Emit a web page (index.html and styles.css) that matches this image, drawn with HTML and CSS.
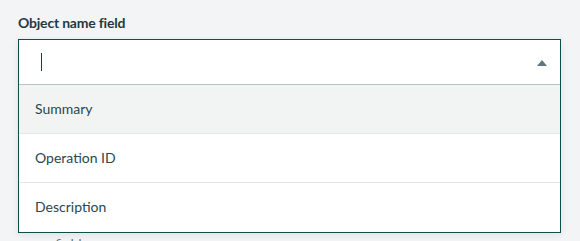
FILE: index.html
```html
<!DOCTYPE html>
<html lang="en">
<head>
  <meta charset="UTF-8">
  <title>Object name field</title>
  <link rel="stylesheet" href="styles.css">
</head>
<body>
  <div class="field">
    <label class="field-label">Object name field</label>
    <div class="select">
      <div class="select-input">
        <span class="caret"></span>
        <svg class="arrow" width="10" height="6" viewBox="0 0 10 6"><path d="M0 6 L5 0 L10 6 Z" fill="#5f7580"/></svg>
      </div>
      <ul class="options">
        <li class="option active">Summary</li>
        <li class="option">Operation ID</li>
        <li class="option">Description</li>
      </ul>
    </div>
    <p class="hint">field</p>
  </div>
</body>
</html>
```

FILE: styles.css
```css
* {
  margin: 0;
  padding: 0;
  box-sizing: border-box;
}
body {
  font-family: "Lato", "Noto Sans", sans-serif;
  background: #f3f4f5;
  color: #22404a;
  padding: 12px 19px 0 18px;
  overflow: hidden;
  height: 241px;
}
.field-label {
  display: block;
  font-size: 14px;
  font-weight: bold;
  color: #1d3a45;
  height: 27px;
  line-height: 22px;
  letter-spacing: -0.2px;
}
.select {
  width: 543px;
  border: 1px solid #0c4f50;
  background: #fff;
  box-shadow: 0 2px 8px rgba(0,0,0,0.08);
}
.select-input {
  height: 45px;
  display: flex;
  align-items: center;
  justify-content: space-between;
  padding: 0 13px 0 22px;
  border-bottom: 1px solid #b9c5ca;
}
.caret {
  width: 1px;
  height: 18px;
  background: #1d3a45;
}
.arrow {
  margin-top: 2px;
}
.options {
  list-style: none;
}
.option {
  height: 49px;
  line-height: 48px;
  padding-left: 16px;
  font-size: 14px;
  color: #2a4650;
  border-bottom: 1px solid #e4e6e7;
}
.option:last-child {
  border-bottom: none;
}
.option.active {
  background: #f2f4f4;
}
.hint {
  margin-top: 2px;
  padding-left: 37px;
  font-size: 14px;
  color: #5f7580;
}
```
